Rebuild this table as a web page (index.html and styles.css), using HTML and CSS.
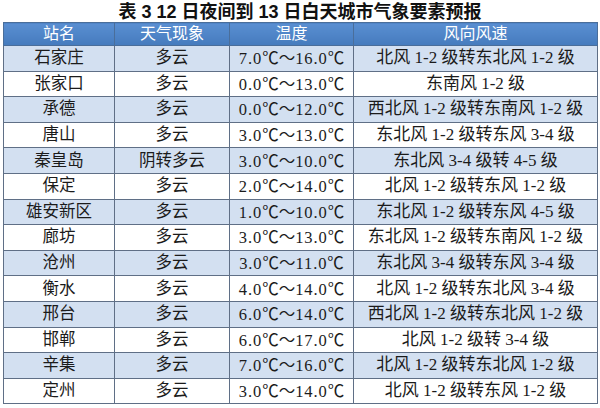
FILE: index.html
```html
<!DOCTYPE html>
<html lang="zh-CN">
<head>
<meta charset="utf-8">
<title>表3 城市气象要素预报</title>
<link rel="stylesheet" href="styles.css">
</head>
<body>
<div class="page">
  <h1 class="title">表 3 12 日夜间到 13 日白天城市气象要素预报</h1>
  <table class="forecast">
    <colgroup>
      <col class="c1"><col class="c2"><col class="c3"><col class="c4">
    </colgroup>
    <thead>
      <tr><th>站名</th><th>天气现象</th><th>温度</th><th>风向风速</th></tr>
    </thead>
    <tbody>
      <tr><td>石家庄</td><td>多云</td><td class="temp">7.0<span class="u">℃～</span>16.0<span class="u">℃</span></td><td class="wind">北风 1-2 级转东北风 1-2 级</td></tr>
      <tr><td>张家口</td><td>多云</td><td class="temp">0.0<span class="u">℃～</span>13.0<span class="u">℃</span></td><td class="wind">东南风 1-2 级</td></tr>
      <tr><td>承德</td><td>多云</td><td class="temp">0.0<span class="u">℃～</span>12.0<span class="u">℃</span></td><td class="wind">西北风 1-2 级转东南风 1-2 级</td></tr>
      <tr><td>唐山</td><td>多云</td><td class="temp">3.0<span class="u">℃～</span>13.0<span class="u">℃</span></td><td class="wind">东北风 1-2 级转东风 3-4 级</td></tr>
      <tr><td>秦皇岛</td><td>阴转多云</td><td class="temp">3.0<span class="u">℃～</span>10.0<span class="u">℃</span></td><td class="wind">东北风 3-4 级转 4-5 级</td></tr>
      <tr><td>保定</td><td>多云</td><td class="temp">2.0<span class="u">℃～</span>14.0<span class="u">℃</span></td><td class="wind">北风 1-2 级转东风 1-2 级</td></tr>
      <tr><td>雄安新区</td><td>多云</td><td class="temp">1.0<span class="u">℃～</span>10.0<span class="u">℃</span></td><td class="wind">东北风 1-2 级转东风 4-5 级</td></tr>
      <tr><td>廊坊</td><td>多云</td><td class="temp">3.0<span class="u">℃～</span>13.0<span class="u">℃</span></td><td class="wind">东北风 1-2 级转东南风 1-2 级</td></tr>
      <tr><td>沧州</td><td>多云</td><td class="temp">3.0<span class="u">℃～</span>11.0<span class="u">℃</span></td><td class="wind">东北风 3-4 级转东风 3-4 级</td></tr>
      <tr><td>衡水</td><td>多云</td><td class="temp">4.0<span class="u">℃～</span>14.0<span class="u">℃</span></td><td class="wind">北风 1-2 级转东北风 3-4 级</td></tr>
      <tr><td>邢台</td><td>多云</td><td class="temp">6.0<span class="u">℃～</span>14.0<span class="u">℃</span></td><td class="wind">西北风 1-2 级转东北风 1-2 级</td></tr>
      <tr><td>邯郸</td><td>多云</td><td class="temp">6.0<span class="u">℃～</span>17.0<span class="u">℃</span></td><td class="wind">北风 1-2 级转 3-4 级</td></tr>
      <tr><td>辛集</td><td>多云</td><td class="temp">7.0<span class="u">℃～</span>16.0<span class="u">℃</span></td><td class="wind">北风 1-2 级转东北风 1-2 级</td></tr>
      <tr><td>定州</td><td>多云</td><td class="temp">3.0<span class="u">℃～</span>14.0<span class="u">℃</span></td><td class="wind">北风 1-2 级转东风 1-2 级</td></tr>
    </tbody>
  </table>
</div>
</body>
</html>
```

FILE: styles.css
```css
html, body {
  margin: 0;
  padding: 0;
  background: #ffffff;
}

.page {
  width: 600px;
  height: 408px;
  padding: 0 3px;
  box-sizing: border-box;
  font-family: "Liberation Serif", "Noto Sans CJK SC", serif;
  color: #1b1b1b;
}

.title {
  margin: 0;
  height: 22px;
  padding-top: 3px;
  box-sizing: border-box;
  line-height: 19px;
  text-align: center;
  font-family: "Liberation Sans", "Noto Sans CJK SC", sans-serif;
  font-size: 18px;
  font-weight: 700;
  color: #111111;
}

.forecast {
  width: 594px;
  border-collapse: collapse;
  table-layout: fixed;
  border: 1px solid #8a97a8;
}

.c1 { width: 111px; }
.c2 { width: 115px; }
.c3 { width: 124px; }
.c4 { width: 244px; }

.forecast th {
  height: 22px;
  padding: 0;
  background: linear-gradient(#5a8fd2, #457bbd);
  color: #ffffff;
  font-family: "Liberation Sans", "Noto Sans CJK SC", sans-serif;
  font-size: 16px;
  font-weight: 400;
  line-height: 20px;
  border: 1px solid #4a6e9a;
  text-align: center;
}

.forecast td {
  height: 24.6px;
  padding: 0;
  text-align: center;
  font-size: 16.5px;
  line-height: 20px;
  border: 1px solid #5f6f86;
  white-space: nowrap;
}

.forecast td.temp {
  letter-spacing: 0.9px;
}

.forecast td.wind {
  font-size: 17px;
}

.u {
  font-family: "Noto Sans CJK SC", sans-serif;
  letter-spacing: 0;
}

.forecast tbody tr:nth-child(odd) td {
  background: #d3e0f1;
}

.forecast tbody tr:nth-child(even) td {
  background: #ffffff;
}
```
